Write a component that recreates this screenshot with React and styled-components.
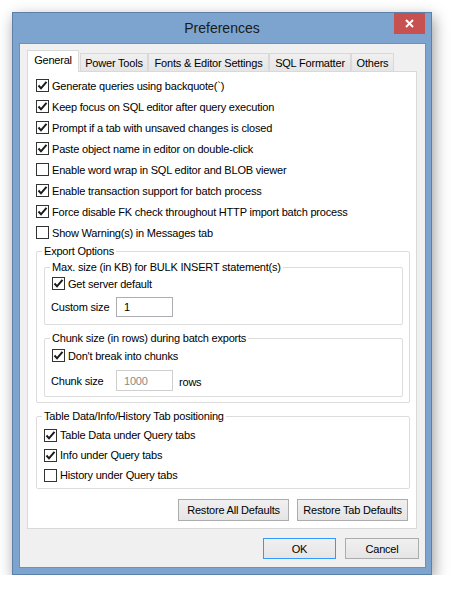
import React from "react";
import styled, { createGlobalStyle } from "styled-components";

const GlobalStyle = createGlobalStyle`
  html, body {
    margin: 0;
    background: #fff;
  }
  body {
    font-family: "Liberation Sans", Arial, sans-serif;
    font-size: 11px;
    letter-spacing: -0.2px;
    color: #000;
  }
`;

const Page = styled.div`
  padding: 12px 0 0 12px;
`;

const Window = styled.div`
  box-sizing: border-box;
  width: 420px;
  height: 563px;
  background: #7ca4cf;
  border: 1px solid #5d80a8;
  padding: 0 5px 7px 6px;
  display: flex;
  flex-direction: column;
  box-shadow: 2px 5px 14px rgba(0, 0, 0, 0.4);
`;

const TitleBar = styled.div`
  height: 30px;
  display: grid;
  grid-template-columns: 31px 1fr 31px;
  align-items: start;
  margin-right: 1px;
`;

const Title = styled.div`
  grid-column: 2;
  text-align: center;
  font-size: 14px;
  letter-spacing: 0;
  line-height: 30px;
  color: #1a1a1a;
`;

const CloseButton = styled.div`
  grid-column: 3;
  width: 31px;
  height: 21px;
  background: #c75050;
  display: flex;
  align-items: center;
  justify-content: center;
`;

const Client = styled.div`
  flex: 1;
  background: #f0f0f0;
  border: 1px solid #6e91b9;
  padding: 6px 6px 8px 7px;
  display: flex;
  flex-direction: column;
`;

const TabStrip = styled.div`
  display: flex;
  align-items: flex-end;
  height: 22px;
  margin-bottom: -1px;
  position: relative;
  z-index: 1;
`;

const Tab = styled.div`
  box-sizing: border-box;
  width: ${(p) => p.$w}px;
  margin-left: ${(p) => p.$ml || 0}px;
  height: ${(p) => (p.$active ? 22 : 19)}px;
  border: 1px solid #d9d9d9;
  border-bottom: ${(p) => (p.$active ? "none" : "1px solid #d9d9d9")};
  background: ${(p) =>
    p.$active ? "#fff" : "linear-gradient(#f0f0f0, #e5e5e5)"};
  text-align: center;
  line-height: 18px;
  white-space: nowrap;
`;

const Panel = styled.div`
  background: #fff;
  border: 1px solid #d9d9d9;
  margin-right: 2px;
  padding: 3px 0 7px 0;
  display: flex;
  flex-direction: column;
`;

const CheckList = styled.div`
  padding-left: 8px;
  display: flex;
  flex-direction: column;
`;

const Row = styled.label`
  display: flex;
  align-items: center;
  height: ${(p) => p.$h || 21}px;
  margin-top: ${(p) => p.$mt || 0}px;
  white-space: nowrap;
`;

const Box = styled.span`
  box-sizing: border-box;
  width: 13px;
  height: 13px;
  border: 1px solid #333;
  background: #fff;
  margin-right: 3px;
  display: flex;
  align-items: center;
  justify-content: center;
  flex-shrink: 0;
`;

const Group = styled.fieldset`
  margin: ${(p) => p.$mt || 0}px ${(p) => p.$mr || 0}px 0 ${(p) => p.$ml || 0}px;
  padding: 0 6px ${(p) => p.$pb || 0}px 7px;
  border: 1px solid #dcdcdc;
  border-radius: 2px;
  min-width: 0;
`;

const Legend = styled.legend`
  padding: 0 2px;
  margin-left: -2px;
  line-height: 15px;
  white-space: nowrap;
`;

const FieldRow = styled.div`
  display: flex;
  align-items: center;
  margin-top: ${(p) => p.$mt || 0}px;
  white-space: nowrap;
`;

const FieldLabel = styled.span`
  width: 65px;
  margin-left: -1px;
`;

const Input = styled.div`
  box-sizing: border-box;
  width: 57px;
  height: ${(p) => p.$h || 20}px;
  border: 1px solid ${(p) => (p.$disabled ? "#cfcfcf" : "#abadb3")};
  background: #fff;
  color: ${(p) => (p.$disabled ? "#8a8a8a" : "#000")};
  padding-left: 7px;
  display: flex;
  align-items: center;
`;

const Unit = styled.span`
  margin-left: 6px;
  padding-top: 3px;
`;

const ButtonRow = styled.div`
  display: flex;
  justify-content: flex-end;
  gap: ${(p) => p.$gap || 7}px;
  margin: ${(p) => p.$mt || 0}px ${(p) => p.$mr || 0}px 0 0;
`;

const Button = styled.div`
  box-sizing: border-box;
  width: ${(p) => p.$w}px;
  height: ${(p) => p.$h || 22}px;
  border: 1px solid ${(p) => (p.$default ? "#3399ff" : "#acacac")};
  background: linear-gradient(#f0f0f0, #e5e5e5);
  display: flex;
  align-items: center;
  justify-content: center;
  white-space: nowrap;
`;

const Check = ({ checked }) => (
  <Box>
    {checked && (
      <svg width="11" height="11" viewBox="0 0 11 11">
        <path
          d="M1.5 5.5 L4 8.3 L9.5 1.8"
          fill="none"
          stroke="#1a1a1a"
          strokeWidth="2"
        />
      </svg>
    )}
  </Box>
);

const Option = ({ checked, children, h, mt }) => (
  <Row $h={h} $mt={mt}>
    <Check checked={checked} />
    {children}
  </Row>
);

const general = [
  ["Generate queries using backquote(`)", true],
  ["Keep focus on SQL editor after query execution", true],
  ["Prompt if a tab with unsaved changes is closed", true],
  ["Paste object name in editor on double-click", true],
  ["Enable word wrap in SQL editor and BLOB viewer", false],
  ["Enable transaction support for batch process", true],
  ["Force disable FK check throughout HTTP import batch process", true],
  ["Show Warning(s) in Messages tab", false],
];

const tabs = [
  { name: "General", w: 52, active: true },
  { name: "Power Tools", w: 68, ml: 1 },
  { name: "Fonts & Editor Settings", w: 121 },
  { name: "SQL Formatter", w: 82 },
  { name: "Others", w: 43 },
];

const App = () => {
  return (
    <Page>
      <GlobalStyle />
      <Window>
        <TitleBar>
          <Title>Preferences</Title>
          <CloseButton>
            <svg width="9" height="9" viewBox="0 0 9 9">
              <path
                d="M1 1 L8 8 M8 1 L1 8"
                stroke="#fff"
                strokeWidth="2"
              />
            </svg>
          </CloseButton>
        </TitleBar>
        <Client>
          <TabStrip>
            {tabs.map((t) => (
              <Tab key={t.name} $w={t.w} $ml={t.ml} $active={t.active}>
                {t.name}
              </Tab>
            ))}
          </TabStrip>
          <Panel>
            <CheckList>
              {general.map(([text, checked]) => (
                <Option key={text} checked={checked}>
                  {text}
                </Option>
              ))}
            </CheckList>
            <Group $ml={8} $mr={6} $mt={1} $pb={5}>
              <Legend>Export Options</Legend>
              <Group $mt={1} $pb={7}>
                <Legend>Max. size (in KB) for BULK INSERT statement(s)</Legend>
                <Option checked h={17}>
                  Get server default
                </Option>
                <FieldRow $mt={5}>
                  <FieldLabel>Custom size</FieldLabel>
                  <Input $h={20}>1</Input>
                </FieldRow>
              </Group>
              <Group $mt={6} $pb={5}>
                <Legend>Chunk size (in rows) during batch exports</Legend>
                <Option checked h={17} mt={1}>
                  Don't break into chunks
                </Option>
                <FieldRow $mt={6}>
                  <FieldLabel>Chunk size</FieldLabel>
                  <Input $h={21} $disabled>
                    1000
                  </Input>
                  <Unit>rows</Unit>
                </FieldRow>
              </Group>
            </Group>
            <Group $ml={8} $mr={6} $mt={6} $pb={3}>
              <Legend>Table Data/Info/History Tab positioning</Legend>
              <Option checked h={20} mt={1}>
                Table Data under Query tabs
              </Option>
              <Option checked h={20}>
                Info under Query tabs
              </Option>
              <Option h={20}>History under Query tabs</Option>
            </Group>
            <ButtonRow $mt={10} $mr={8} $gap={8}>
              <Button $w={111}>Restore All Defaults</Button>
              <Button $w={111}>Restore Tab Defaults</Button>
            </ButtonRow>
          </Panel>
          <ButtonRow $mt={9} $gap={9}>
            <Button $w={73} $h={21} $default>
              OK
            </Button>
            <Button $w={74} $h={21}>
              Cancel
            </Button>
          </ButtonRow>
        </Client>
      </Window>
    </Page>
  );
};

export default App;
